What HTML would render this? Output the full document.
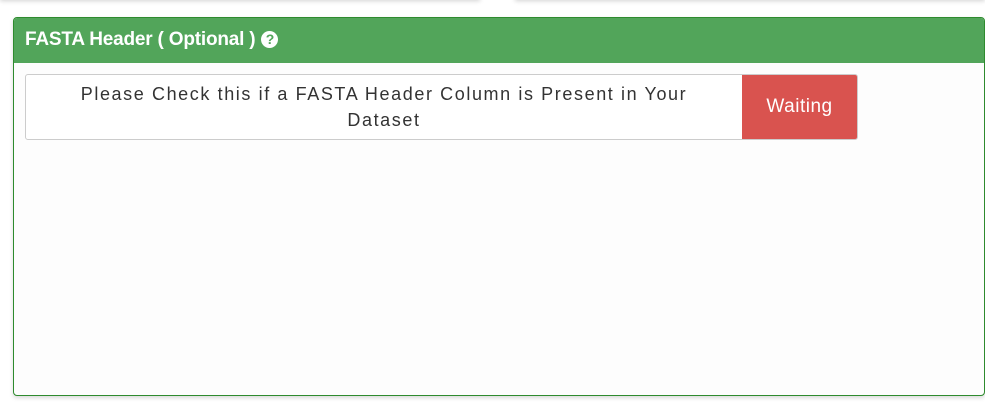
<!DOCTYPE html>
<html><head><style>
body{margin:0;width:985px;height:404px;background:#fff;position:relative;overflow:hidden;font-family:"Liberation Sans",sans-serif}
.sh{position:absolute;top:-10px;height:10px;background:#fff;box-shadow:0 1px 5px rgba(0,0,0,.18)}
.panel{position:absolute;left:13px;top:17px;width:970px;height:377px;border:1px solid #2e8b2e;border-radius:4px;background:#fdfdfd;box-shadow:0 2px 4px rgba(0,0,0,.15);overflow:hidden}
.hd{height:45px;background:#52a55a;color:#fff;font-weight:bold;font-size:19px;line-height:44px;padding-left:11px;letter-spacing:-0.2px}
.q{display:inline-block;width:17px;height:17px;border-radius:50%;background:#fff;color:#52a55a;font-size:14px;line-height:17px;text-align:center;vertical-align:1px;margin-left:1px}
.grp{position:absolute;left:11px;top:56px;width:831px;height:64px;border:1px solid #ccc;border-radius:3px;background:#fff;overflow:hidden}
.txt{position:absolute;left:0;top:0;width:716px;height:64px;display:flex;align-items:center;justify-content:center;text-align:center;font-size:18px;color:#333;line-height:26px;letter-spacing:1.6px;padding:0 40px;box-sizing:border-box}
.btn{position:absolute;left:716px;top:0;width:115px;height:64px;background:#d9534f;color:#fff;font-size:19px;letter-spacing:0.5px;line-height:64px;text-align:center}
</style></head><body>
<div class="sh" style="left:0;width:480px"></div>
<div class="sh" style="left:515px;width:470px"></div>
<div class="panel">
<div class="hd">FASTA Header ( Optional ) <span class="q">?</span></div>
<div class="grp"><div class="txt">Please Check this if a FASTA Header Column is Present in Your Dataset</div><div class="btn">Waiting</div></div>
</div>
</body></html>
